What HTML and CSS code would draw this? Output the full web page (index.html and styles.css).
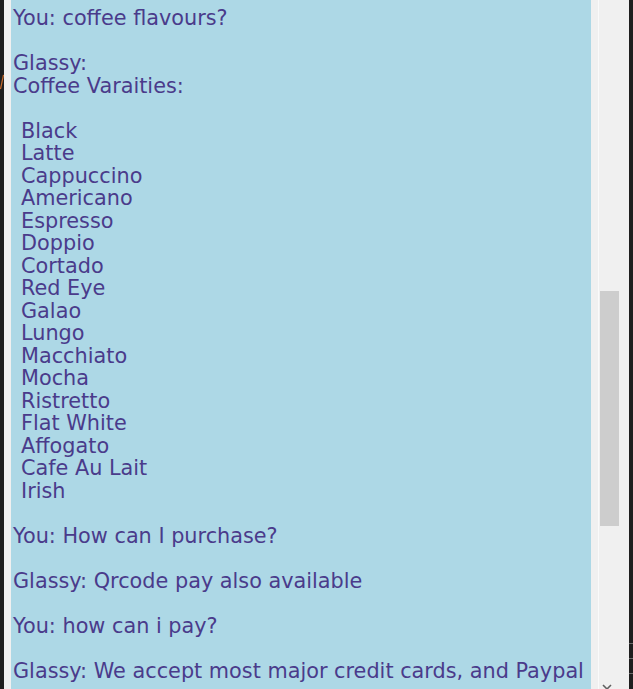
FILE: index.html
```html
<!DOCTYPE html>
<html>
<head>
<meta charset="utf-8">
<link rel="stylesheet" href="styles.css">
</head>
<body>
<div class="frame">
  <div class="edge-left">
    <svg class="mark" width="4" height="16" viewBox="0 0 4 16"><path d="M3.5 1 L0.5 15" stroke="#c8692a" stroke-width="1.2" fill="none"/></svg>
  </div>
  <div class="gutter-left"></div>
  <div class="chat">
    <div class="line">You: coffee flavours?</div>
    <div class="line blank"></div>
    <div class="line">Glassy:</div>
    <div class="line">Coffee Varaities:</div>
    <div class="line blank"></div>
    <div class="line item">Black</div>
    <div class="line item">Latte</div>
    <div class="line item">Cappuccino</div>
    <div class="line item">Americano</div>
    <div class="line item">Espresso</div>
    <div class="line item">Doppio</div>
    <div class="line item">Cortado</div>
    <div class="line item">Red Eye</div>
    <div class="line item">Galao</div>
    <div class="line item">Lungo</div>
    <div class="line item">Macchiato</div>
    <div class="line item">Mocha</div>
    <div class="line item">Ristretto</div>
    <div class="line item">Flat White</div>
    <div class="line item">Affogato</div>
    <div class="line item">Cafe Au Lait</div>
    <div class="line item">Irish</div>
    <div class="line blank"></div>
    <div class="line">You: How can I purchase?</div>
    <div class="line blank"></div>
    <div class="line">Glassy: Qrcode pay also available</div>
    <div class="line blank"></div>
    <div class="line">You: how can i pay?</div>
    <div class="line blank"></div>
    <div class="line">Glassy: We accept most major credit cards, and Paypal</div>
  </div>
  <div class="gutter-right"></div>
  <div class="divider"></div>
  <div class="scrollbar">
    <div class="thumb"></div>
    <svg class="arrow" width="10" height="6" viewBox="0 0 10 6"><path d="M1 1 L5 5 L9 1" stroke="#606060" stroke-width="1.6" fill="none"/></svg>
  </div>
  <div class="edge-right">
    <div class="tick"></div>
    <div class="tick"></div>
    <div class="tick"></div>
  </div>
</div>
</body>
</html>
```

FILE: styles.css
```css
html, body {
  margin: 0;
  padding: 0;
  background: #1e1e1e;
}

.frame {
  display: flex;
  width: 633px;
  height: 689px;
  overflow: hidden;
}

.edge-left {
  width: 4px;
  flex: none;
  background: #1e1e1e;
}

.mark {
  display: block;
  margin-top: 74px;
}

.gutter-left {
  width: 7px;
  flex: none;
  background: #f0f0f0;
}

.chat {
  width: 580px;
  flex: none;
  background: #add8e6;
  color: #4a3b8b;
  font-family: "DejaVu Sans", Verdana, sans-serif;
  font-size: 20.8px;
  line-height: 22.5px;
  padding: 7px 0 0 2px;
  box-sizing: border-box;
  white-space: nowrap;
  overflow: hidden;
}

.line {
  height: 22.5px;
}

.item {
  padding-left: 8px;
}

.gutter-right {
  width: 7px;
  flex: none;
  background: #f0f0f0;
}

.divider {
  width: 1px;
  flex: none;
  background: #fafafa;
}

.scrollbar {
  position: relative;
  width: 30px;
  flex: none;
  background: #f0f0f0;
  box-sizing: border-box;
  padding-left: 1px;
}

.thumb {
  width: 19px;
  height: 235px;
  margin-top: 291px;
  background: #cdcdcd;
}

.arrow {
  position: absolute;
  left: 3px;
  top: 684px;
}

.edge-right {
  width: 4px;
  flex: none;
  background: #1e1e1e;
  display: flex;
  flex-direction: column;
  gap: 14px;
  padding-top: 643px;
}

.tick {
  height: 1px;
  background: #6a6a6a;
}
```
